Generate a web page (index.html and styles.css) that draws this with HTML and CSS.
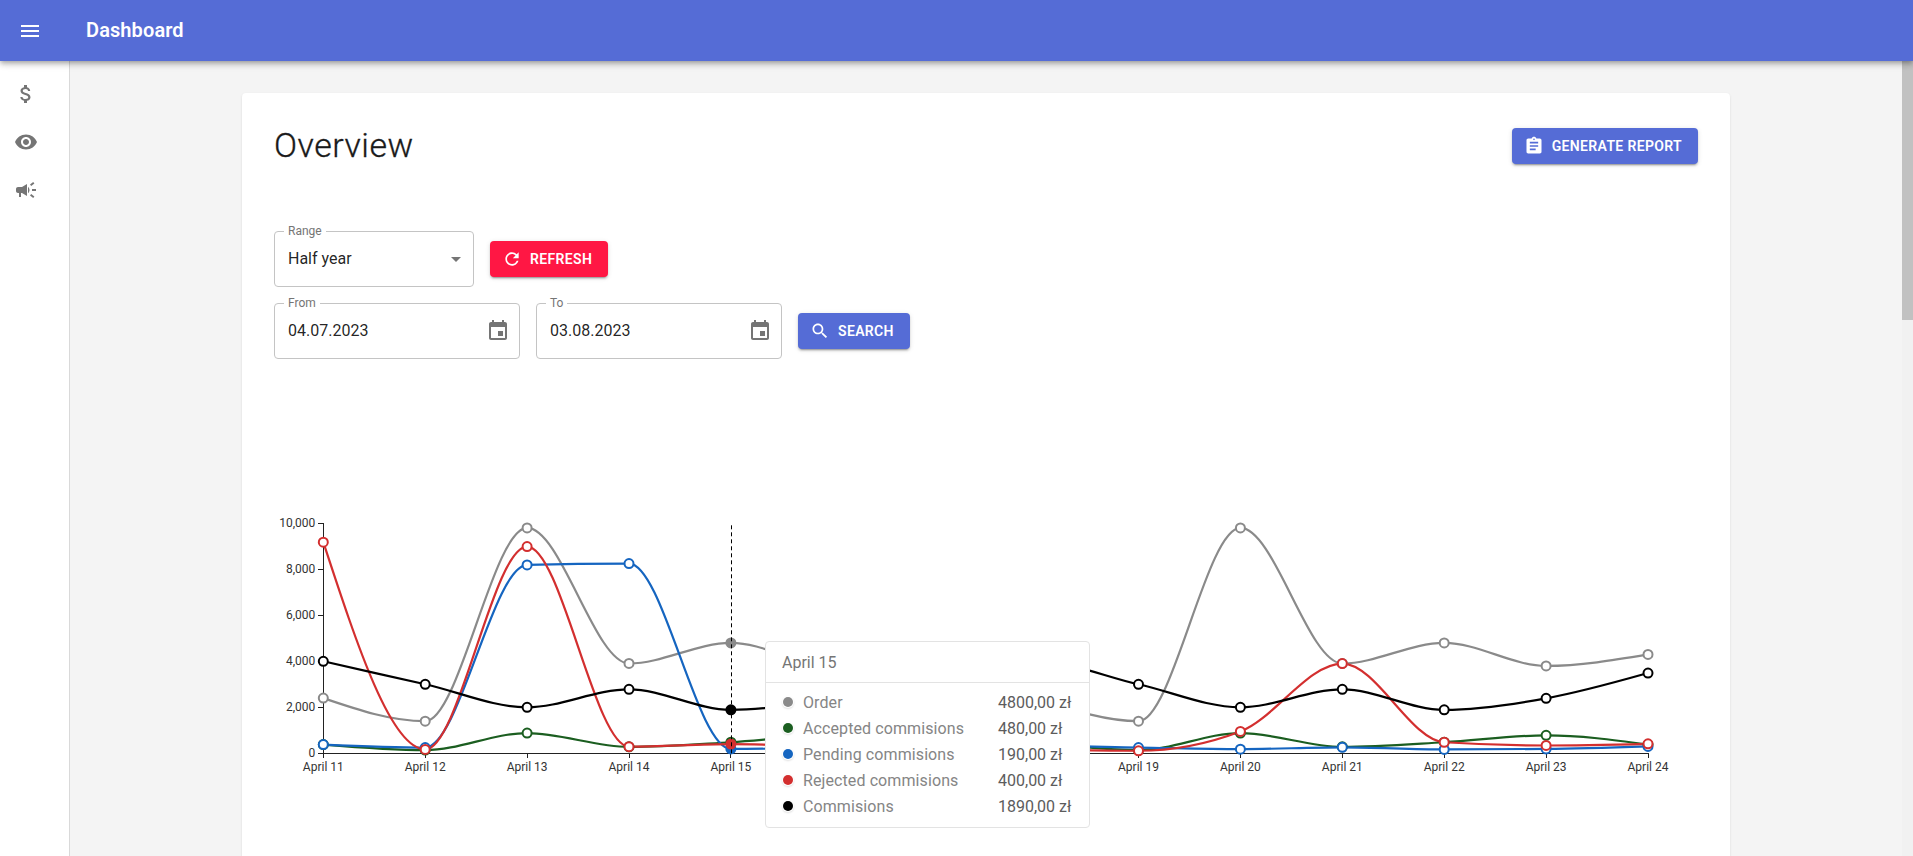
FILE: index.html
```html
<!DOCTYPE html>
<html lang="en">
<head>
<meta charset="utf-8">
<title>Dashboard</title>
<link rel="stylesheet" href="styles.css">
</head>
<body>
<header class="appbar">
  <svg class="icon appbar-menu" viewBox="0 0 24 24"><path d="M3 18h18v-2H3v2zm0-5h18v-2H3v2zm0-7v2h18V6H3z"/></svg>
  <h1 class="appbar-title">Dashboard</h1>
</header>
<div class="layout">
  <nav class="sidebar">
    <div class="nav-item"><svg class="icon" viewBox="0 0 24 24"><path d="M11.8 10.9c-2.27-.59-3-1.2-3-2.15 0-1.09 1.01-1.85 2.7-1.85 1.78 0 2.44.85 2.5 2.1h2.21c-.07-1.72-1.12-3.3-3.21-3.81V3h-3v2.16c-1.94.42-3.5 1.68-3.5 3.61 0 2.31 1.91 3.46 4.7 4.13 2.5.6 3 1.48 3 2.41 0 .69-.49 1.79-2.7 1.79-2.06 0-2.87-.92-2.98-2.1h-2.2c.12 2.19 1.76 3.42 3.68 3.83V21h3v-2.15c1.95-.37 3.5-1.5 3.5-3.55 0-2.84-2.43-3.81-4.7-4.4z"/></svg></div>
    <div class="nav-item"><svg class="icon" viewBox="0 0 24 24"><path d="M12 4.5C7 4.5 2.73 7.61 1 12c1.73 4.39 6 7.5 11 7.5s9.27-3.11 11-7.5c-1.73-4.39-6-7.5-11-7.5zM12 17c-2.76 0-5-2.24-5-5s2.24-5 5-5 5 2.24 5 5-2.24 5-5 5zm0-8c-1.66 0-3 1.34-3 3s1.34 3 3 3 3-1.34 3-3-1.34-3-3-3z"/></svg></div>
    <div class="nav-item"><svg class="icon" viewBox="0 0 24 24"><path d="M18 11v2h4v-2h-4zm-2 6.61c.96.71 2.21 1.65 3.2 2.39.4-.53.8-1.07 1.2-1.6-.99-.74-2.24-1.68-3.2-2.4-.4.54-.8 1.08-1.2 1.61zM20.4 5.6c-.4-.53-.8-1.07-1.2-1.6-.99.74-2.24 1.68-3.2 2.4.4.53.8 1.07 1.2 1.6.96-.72 2.21-1.65 3.2-2.4zM4 9c-1.1 0-2 .9-2 2v2c0 1.1.9 2 2 2h1v4h2v-4h1l5 3V6L8 9H4zm11.5 3c0-1.33-.58-2.53-1.5-3.35v6.69c.92-.81 1.5-2.01 1.5-3.34z"/></svg></div>
  </nav>
  <main class="content">
    <section class="card">
      <div class="card-head">
        <h2 class="card-title">Overview</h2>
        <button class="btn btn-primary btn-report"><svg class="icon btn-icon" viewBox="0 0 24 24"><path d="M19 3h-4.18C14.4 1.84 13.3 1 12 1c-1.3 0-2.4.84-2.82 2H5c-1.1 0-2 .9-2 2v14c0 1.1.9 2 2 2h14c1.1 0 2-.9 2-2V5c0-1.1-.9-2-2-2zm-7 0c.55 0 1 .45 1 1s-.45 1-1 1-1-.45-1-1 .45-1 1-1zm2 14H7v-2h7v2zm3-4H7v-2h10v2zm0-4H7V7h10v2z"/></svg>Generate report</button>
      </div>
      <div class="filters">
        <div class="filter-row">
          <div class="field field-range">
            <span class="field-label">Range</span>
            <span class="field-value">Half year</span>
            <span class="select-caret"></span>
          </div>
          <button class="btn btn-danger"><svg class="icon btn-icon" viewBox="0 0 24 24"><path d="M17.65 6.35C16.2 4.9 14.21 4 12 4c-4.42 0-7.99 3.58-7.99 8s3.57 8 7.99 8c3.73 0 6.84-2.55 7.73-6h-2.08c-.82 2.33-3.04 4-5.65 4-3.31 0-6-2.69-6-6s2.69-6 6-6c1.66 0 3.14.69 4.22 1.78L13 11h7V4l-2.35 2.35z"/></svg>Refresh</button>
        </div>
        <div class="filter-row">
          <div class="field field-date">
            <span class="field-label">From</span>
            <span class="field-value">04.07.2023</span>
            <svg class="icon field-icon" viewBox="0 0 24 24"><path d="M17 12h-5v5h5v-5zM16 1v2H8V1H6v2H5c-1.11 0-1.99.9-1.99 2L3 19c0 1.1.89 2 2 2h14c1.1 0 2-.9 2-2V5c0-1.1-.9-2-2-2h-1V1h-2zm3 18H5V8h14v11z"/></svg>
          </div>
          <div class="field field-date">
            <span class="field-label">To</span>
            <span class="field-value">03.08.2023</span>
            <svg class="icon field-icon" viewBox="0 0 24 24"><path d="M17 12h-5v5h5v-5zM16 1v2H8V1H6v2H5c-1.11 0-1.99.9-1.99 2L3 19c0 1.1.89 2 2 2h14c1.1 0 2-.9 2-2V5c0-1.1-.9-2-2-2h-1V1h-2zm3 18H5V8h14v11z"/></svg>
          </div>
          <button class="btn btn-primary"><svg class="icon btn-icon" viewBox="0 0 24 24"><path d="M15.5 14h-.79l-.28-.27C15.41 12.59 16 11.11 16 9.5 16 5.91 13.09 3 9.5 3S3 5.91 3 9.5 5.91 16 9.5 16c1.61 0 3.09-.59 4.23-1.57l.27.28v.79l5 4.99L20.49 19l-4.99-5zm-6 0C7.01 14 5 11.99 5 9.5S7.01 5 9.5 5 14 7.01 14 9.5 11.99 14 9.5 14z"/></svg>Search</button>
        </div>
      </div>
      <div class="chart">
        <svg id="chart-svg" class="chart-svg" width="1424" height="320" viewBox="0 0 1424 320"></svg>
        <div class="tooltip">
          <div class="tooltip-title">April 15</div>
          <ul class="tooltip-list">
            <li class="tooltip-row"><span class="dot dot-order"></span><span class="tooltip-name">Order</span><span class="tooltip-value">4800,00 zł</span></li>
            <li class="tooltip-row"><span class="dot dot-accepted"></span><span class="tooltip-name">Accepted commisions</span><span class="tooltip-value">480,00 zł</span></li>
            <li class="tooltip-row"><span class="dot dot-pending"></span><span class="tooltip-name">Pending commisions</span><span class="tooltip-value">190,00 zł</span></li>
            <li class="tooltip-row"><span class="dot dot-rejected"></span><span class="tooltip-name">Rejected commisions</span><span class="tooltip-value">400,00 zł</span></li>
            <li class="tooltip-row"><span class="dot dot-commisions"></span><span class="tooltip-name">Commisions</span><span class="tooltip-value">1890,00 zł</span></li>
          </ul>
        </div>
      </div>
    </section>
  </main>
  <div class="scrollbar"><div class="scrollbar-thumb"></div></div>
</div>
<script src="chart.js"></script>
</body>
</html>
```
FILE: styles.css
```css
* { box-sizing: border-box; }
html, body { margin: 0; height: 100%; overflow: hidden; }
body {
  font-family: Roboto, "Liberation Sans", sans-serif;
  background: #f4f4f4;
  color: rgba(0, 0, 0, 0.87);
}
.icon { width: 24px; height: 24px; fill: currentColor; flex: none; display: block; }

.appbar {
  position: relative;
  z-index: 3;
  height: 61px;
  background: #556cd6;
  color: #fff;
  display: flex;
  align-items: center;
  padding: 0 18px;
  box-shadow: 0 2px 4px -1px rgba(0,0,0,.2), 0 4px 5px 0 rgba(0,0,0,.14), 0 1px 10px 0 rgba(0,0,0,.12);
}
.appbar-title { margin: 0 0 2px 44px; font-size: 20px; font-weight: 600; line-height: 1.6; letter-spacing: 0.1px; }

.layout { display: flex; height: 795px; }
.sidebar {
  width: 70px;
  flex: none;
  background: #fff;
  border-right: 1px solid #d9d9d9;
  padding-top: 9px;
  color: #757575;
}
.nav-item { height: 48px; display: flex; align-items: center; padding-left: 14px; }

.content { flex: 1; min-width: 0; padding: 32px 172px 0; overflow: hidden; }
.card {
  background: #fff;
  border-radius: 4px;
  padding: 32px;
  height: 900px;
  box-shadow: 0 2px 1px -1px rgba(0,0,0,.12), 0 1px 1px 0 rgba(0,0,0,.08), 0 1px 3px 0 rgba(0,0,0,.08);
}
.card-head { display: flex; justify-content: space-between; align-items: flex-start; height: 106px; }
.card-title { margin: 0; font-size: 34px; font-weight: 300; line-height: 1.235; letter-spacing: 0.5px; color: #1a1a1a; -webkit-text-stroke: 0.3px #1a1a1a; }
.btn-report { margin-top: 3px; padding-left: 13px; }

.btn {
  height: 36px;
  border: 0;
  border-radius: 4px;
  padding: 0 16px 0 12px;
  display: inline-flex;
  align-items: center;
  font: 600 14px/1 Roboto, "Liberation Sans", sans-serif;
  letter-spacing: 0.35px;
  text-transform: uppercase;
  color: #fff;
  box-shadow: 0 3px 1px -2px rgba(0,0,0,.2), 0 2px 2px 0 rgba(0,0,0,.14), 0 1px 5px 0 rgba(0,0,0,.12);
}
.btn-primary { background: #556cd6; }
.btn-danger { background: #ff1744; }
.btn-icon { width: 20px; height: 20px; margin-right: 8px; }

.filters { display: flex; flex-direction: column; gap: 16px; }
.filter-row { display: flex; align-items: center; gap: 16px; }
.field {
  position: relative;
  height: 56px;
  border: 1px solid #c4c4c4;
  border-radius: 4px;
  display: flex;
  align-items: center;
  justify-content: space-between;
  padding: 0 9px 0 13px;
}
.field-range { width: 200px; }
.field-date { width: 246px; }
.field-label {
  position: absolute;
  left: 9px;
  top: -7px;
  padding: 0 4px;
  background: #fff;
  font-size: 12px;
  line-height: 12px;
  color: #757575;
}
.field-value { font-size: 16px; letter-spacing: 0; margin-top: -1px; }
.select-caret {
  width: 0;
  height: 0;
  margin-right: 3px;
  border-left: 5px solid transparent;
  border-right: 5px solid transparent;
  border-top: 5px solid #757575;
}
.field-icon { color: #757575; }

.chart { position: relative; height: 480px; }
.chart-svg { display: block; position: absolute; left: 0; top: 112px; }
.axis-line { stroke: #222; stroke-width: 1; fill: none; shape-rendering: crispEdges; }
.axis-text { font-family: Roboto, "Liberation Sans", sans-serif; font-size: 12px; fill: #333; }
.series-line { fill: none; stroke-width: 2.2; }
.series-dot { fill: #fff; stroke-width: 2; }
.cursor-line { stroke: #000; stroke-width: 1; stroke-dasharray: 4 3; }

.tooltip {
  position: absolute;
  left: 491px;
  top: 282px;
  width: 325px;
  height: 187px;
  background: #fff;
  border: 1px solid #e3e3e3;
  border-radius: 4px;
}
.tooltip-title {
  height: 41px;
  padding: 0 16px;
  display: flex;
  align-items: center;
  border-bottom: 1px solid #e3e3e3;
  font-size: 16px;
  color: #757575;
}
.tooltip-list { list-style: none; margin: 0; padding: 6px 16px 0; }
.tooltip-row { height: 26px; display: flex; align-items: center; font-size: 16px; }
.tooltip-name { color: #858585; width: 195px; letter-spacing: 0.1px; }
.tooltip-value { color: #5c5c5c; }
.dot {
  width: 10px;
  height: 10px;
  margin: 0 10px 0 1px;
  border-radius: 50%;
  box-shadow: 0 0 0 1px #fff, 0 1px 2px 1px rgba(0,0,0,.12);
  flex: none;
}
.dot-order { background: #8a8a8a; }
.dot-accepted { background: #1b5e20; }
.dot-pending { background: #1565c0; }
.dot-rejected { background: #d32f2f; }
.dot-commisions { background: #000; }

.scrollbar { width: 11px; flex: none; background: #f1f1f1; }
.scrollbar-thumb { height: 259px; background: #c1c1c1; }
```
FILE: chart.js
```js
var NS = 'http://www.w3.org/2000/svg';
var svg = document.getElementById('chart-svg');
var X0 = 49.3, DX = 101.9, Y0 = 282.3, K = 0.023, ACTIVE = 4;
var series = [
  { color: '#8a8a8a', data: [2400,1398,9800,3908,4800,3800,4300,2400,1398,9800,3908,4800,3800,4300] },
  { color: '#1b5e20', data: [380,140,880,280,480,780,380,380,140,880,280,480,780,380] },
  { color: '#1565c0', data: [380,250,8190,8250,190,240,300,320,250,180,260,170,190,300] },
  { color: '#d32f2f', data: [9180,170,8990,290,400,300,250,180,110,950,3900,480,340,410] },
  { color: '#000000', data: [4000,3000,2000,2780,1890,2390,3490,4000,3000,2000,2780,1890,2390,3490] }
];
function px(i) { return X0 + i * DX; }
function py(v) { return Y0 - v * K; }
function el(name, attrs, text) {
  var n = document.createElementNS(NS, name);
  for (var k in attrs) n.setAttribute(k, attrs[k]);
  if (text) n.textContent = text;
  svg.appendChild(n);
  return n;
}
// d3 curveMonotoneX, the curve the original chart draws with
function slopes(ys) {
  var n = ys.length, d = [], m = [];
  for (var i = 0; i < n - 1; i++) d[i] = (ys[i + 1] - ys[i]) / DX;
  for (i = 1; i < n - 1; i++) {
    var a = d[i - 1], b = d[i];
    var s = (a < 0 ? -1 : 1) + (b < 0 ? -1 : 1);
    m[i] = s * Math.min(Math.abs(a), Math.abs(b), Math.abs(a + b) / 4);
  }
  m[0] = (3 * d[0] - m[1]) / 2;
  m[n - 1] = (3 * d[n - 2] - m[n - 2]) / 2;
  return m;
}
function path(data) {
  var ys = data.map(py), m = slopes(ys), h = DX / 3;
  var d = 'M' + px(0) + ',' + ys[0];
  for (var i = 0; i < ys.length - 1; i++) {
    d += 'C' + (px(i) + h) + ',' + (ys[i] + m[i] * h) + ' ' + (px(i + 1) - h) + ',' + (ys[i + 1] - m[i + 1] * h) + ' ' + px(i + 1) + ',' + ys[i + 1];
  }
  return d;
}
el('path', { 'class': 'axis-line', d: 'M' + X0 + ',' + (Y0 - 230) + 'V' + Y0 + 'H' + px(13) });
for (var t = 0; t <= 10000; t += 2000) {
  el('line', { 'class': 'axis-line', x1: X0 - 5, x2: X0, y1: py(t), y2: py(t) });
  el('text', { 'class': 'axis-text', x: X0 - 8, y: py(t) + 4, 'text-anchor': 'end' }, t.toLocaleString('en-US'));
}
for (var i = 0; i < 14; i++) {
  el('line', { 'class': 'axis-line', x1: px(i), x2: px(i), y1: Y0, y2: Y0 + 5 });
  el('text', { 'class': 'axis-text', x: px(i), y: Y0 + 18, 'text-anchor': 'middle' }, 'April ' + (11 + i));
}
series.forEach(function (s) {
  el('path', { 'class': 'series-line', d: path(s.data), stroke: s.color });
});
series.forEach(function (s) {
  s.data.forEach(function (v, i) {
    var active = i === ACTIVE;
    el('circle', {
      'class': 'series-dot', cx: px(i), cy: py(v), r: active ? 5.5 : 4.5,
      stroke: active ? 'none' : s.color, style: active ? 'fill:' + s.color : ''
    });
  });
});
var cx = Math.round(px(ACTIVE)) + 0.5;
el('line', { 'class': 'cursor-line', x1: cx, x2: cx, y1: Y0 - 228, y2: Y0 });
```
